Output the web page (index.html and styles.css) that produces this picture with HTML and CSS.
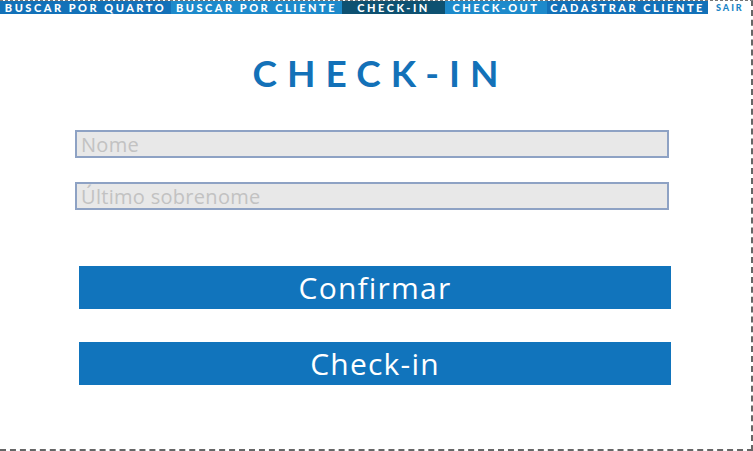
FILE: index.html
```html
<!DOCTYPE html>
<html lang="pt">
<head>
<meta charset="utf-8">
<title>Check-in</title>
<link rel="stylesheet" href="styles.css">
</head>
<body>
<div class="frame">
  <nav class="nav">
    <a class="tab tab-a w-quarto">BUSCAR POR QUARTO</a>
    <a class="tab tab-b w-cliente">BUSCAR POR CLIENTE</a>
    <a class="tab tab-active w-checkin">CHECK-IN</a>
    <a class="tab tab-b w-checkout">CHECK-OUT</a>
    <a class="tab tab-a w-cadastrar">CADASTRAR CLIENTE</a>
    <a class="tab tab-exit">SAIR</a>
  </nav>
  <main class="content">
    <h1 class="title">CHECK-IN</h1>
    <form class="form">
      <input class="field" type="text" placeholder="Nome">
      <input class="field" type="text" placeholder="Último sobrenome">
      <div class="actions">
        <button class="btn" type="button">Confirmar</button>
        <button class="btn" type="button">Check-in</button>
      </div>
    </form>
  </main>
</div>
</body>
</html>
```
FILE: styles.css
```css
* { box-sizing: border-box; }
html, body { margin: 0; padding: 0; background: #fff; }
.frame {
  width: 753px;
  height: 451px;
  border-top: 1px dashed #777;
  border-right: 2px dashed #666;
  border-bottom: 2px dashed #666;
  display: flex;
  flex-direction: column;
  overflow: hidden;
}
.nav {
  display: flex;
  height: 13px;
  font-family: Lato, "Liberation Sans", sans-serif;
  font-weight: 900;
  font-size: 11px;
  letter-spacing: 2.5px;
  line-height: 13px;
}
.tab {
  display: flex;
  align-items: center;
  justify-content: center;
  color: #fff;
  white-space: nowrap;
  text-decoration: none;
}
.tab-a { background: #1371b8; }
.tab-b { background: #1d8acb; }
.tab-active { background: #0e5171; }
.tab-exit { background: #fff; color: #1a84c6; padding-left: 8px; font-size: 9px; letter-spacing: 2px; }
.w-quarto { width: 171px; }
.w-cliente { width: 171px; }
.w-checkin { width: 103px; }
.w-checkout { width: 102px; }
.w-cadastrar { width: 161px; }
.content {
  display: flex;
  flex-direction: column;
  align-items: center;
}
.title {
  margin: 37px 0 0;
  font-family: Lato, "Liberation Sans", sans-serif;
  font-weight: 700;
  font-size: 37px;
  line-height: 44px;
  letter-spacing: 10px;
  padding-left: 10px;
  color: #1371b8;
}
.form {
  width: 100%;
  display: flex;
  flex-direction: column;
  padding-left: 75px;
  margin-top: 35px;
}
.field {
  width: 594px;
  height: 28px;
  margin: 0 0 24px;
  padding: 0 4px;
  border: 2px solid #8ea2c4;
  background: #e8e8e8;
  font-family: "Open Sans", "Noto Sans", sans-serif;
  font-size: 20px;
  letter-spacing: 0.3px;
  color: #333;
  outline: none;
}
.field::placeholder { color: #c2c2c2; }
.actions {
  display: flex;
  flex-direction: column;
  gap: 33px;
  padding-left: 4px;
  margin-top: 32px;
}
.btn {
  width: 592px;
  height: 43px;
  border: none;
  background: #1174bc;
  color: #fff;
  font-family: "Open Sans", "Noto Sans", sans-serif;
  font-size: 30px;
  letter-spacing: 1.2px;
  padding: 0;
  cursor: pointer;
}
```
